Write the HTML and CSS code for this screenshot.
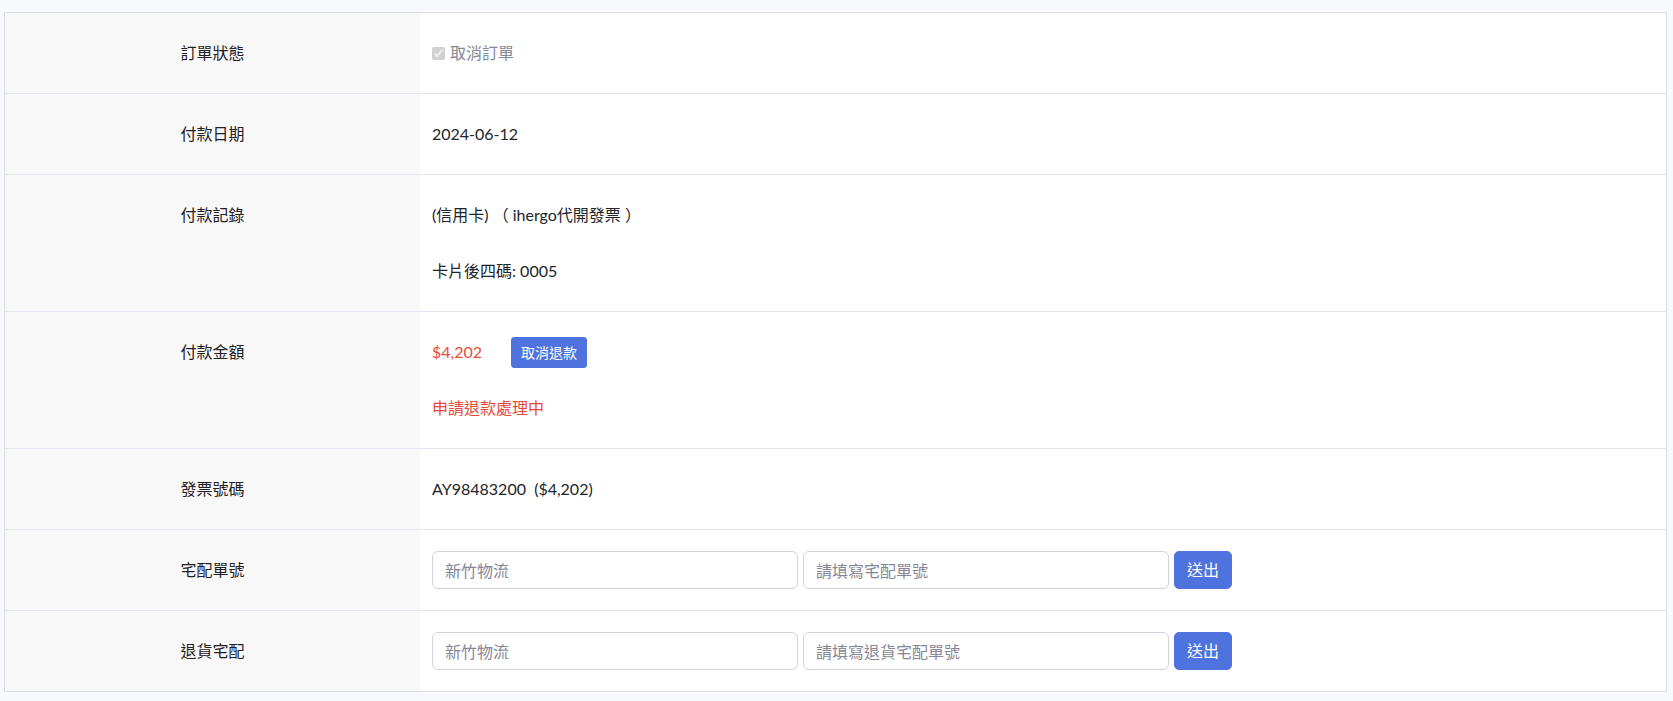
FILE: index.html
```html
<!DOCTYPE html>
<html lang="zh-Hant">
<head>
<meta charset="utf-8">
<title>訂單明細</title>
<link rel="stylesheet" href="styles.css">
</head>
<body>
<div class="page">
  <div class="detail">
    <div class="row">
      <div class="label">訂單狀態</div>
      <div class="value">
        <label class="check"><input type="checkbox" checked disabled><span>取消訂單</span></label>
      </div>
    </div>
    <div class="row">
      <div class="label">付款日期</div>
      <div class="value">2024-06-12</div>
    </div>
    <div class="row">
      <div class="label">付款記錄</div>
      <div class="value stack">
        <div>(信用卡) （ ihergo代開發票 ）</div>
        <div>卡片後四碼: 0005</div>
      </div>
    </div>
    <div class="row">
      <div class="label">付款金額</div>
      <div class="value stack">
        <div class="amount-line">
          <span class="danger">$4,202</span>
          <button class="btn btn-sm" type="button">取消退款</button>
        </div>
        <div class="danger">申請退款處理中</div>
      </div>
    </div>
    <div class="row">
      <div class="label">發票號碼</div>
      <div class="value">AY98483200&nbsp;&nbsp;($4,202)</div>
    </div>
    <div class="row">
      <div class="label">宅配單號</div>
      <div class="value form-line">
        <input class="field" type="text" placeholder="新竹物流">
        <input class="field" type="text" placeholder="請填寫宅配單號">
        <button class="btn" type="button">送出</button>
      </div>
    </div>
    <div class="row">
      <div class="label">退貨宅配</div>
      <div class="value form-line">
        <input class="field" type="text" placeholder="新竹物流">
        <input class="field" type="text" placeholder="請填寫退貨宅配單號">
        <button class="btn" type="button">送出</button>
      </div>
    </div>
  </div>
</div>
</body>
</html>
```

FILE: styles.css
```css
html, body {
  margin: 0;
  padding: 0;
  background: #f8f9fc;
}

body {
  font-family: "Lato", "Noto Sans CJK TC", sans-serif;
  font-size: 16px;
  line-height: 24px;
  color: #212529;
}

.page {
  padding: 12px 6px 0 4px;
}

.detail {
  border: 1px solid #dcdde3;
  background: #fff;
}

.row {
  display: grid;
  grid-template-columns: 415px 1fr;
}

.row + .row {
  border-top: 1px solid #e3e6f0;
}

.label {
  background: #f8f8f8;
  text-align: center;
  padding: 28px 12px;
  color: #1f2024;
}

.value {
  padding: 28px 12px;
  background: #fff;
}

.stack {
  display: flex;
  flex-direction: column;
  gap: 32px;
}

.check {
  display: flex;
  align-items: center;
  color: #858796;
}

.check input {
  margin: 0 5px 0 0;
  width: 13px;
  height: 13px;
}

.amount-line {
  display: flex;
  align-items: center;
  height: 24px;
  gap: 29px;
}

.danger {
  color: #e74a3b;
}

.btn {
  font-family: inherit;
  font-size: 16px;
  line-height: 24px;
  padding: 6px 12px;
  border: 1px solid #4e73df;
  border-radius: 5px;
  background: #4e73df;
  color: #fff;
  cursor: pointer;
}

.btn-sm {
  font-size: 14px;
  line-height: 21px;
  padding: 4px 9px;
  border-radius: 3px;
}

.form-line {
  display: flex;
  align-items: center;
  gap: 5px;
  padding-top: 21px;
  padding-bottom: 21px;
}

.field {
  box-sizing: border-box;
  width: 366px;
  height: 38px;
  padding: 6px 12px;
  font-family: inherit;
  font-size: 16px;
  color: #6e707e;
  border: 1px solid #d1d3e2;
  border-radius: 6px;
  background: #fff;
  outline: none;
}

.field::placeholder {
  color: #858796;
}
```
